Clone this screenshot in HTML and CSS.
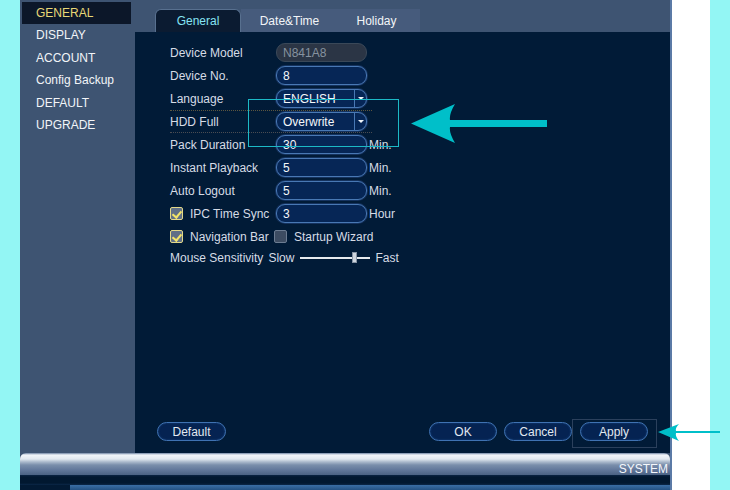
FILE: index.html
```html
<!DOCTYPE html>
<html lang="en">
<head>
    <meta charset="UTF-8">
    <title>System - General</title>
    <link rel="stylesheet" href="styles.css">
</head>
<body>
    <div class="edge"></div>

    <div class="screen">
        <div class="main">
            <ul class="sidebar">
                <li class="active">GENERAL</li>
                <li>DISPLAY</li>
                <li>ACCOUNT</li>
                <li>Config Backup</li>
                <li>DEFAULT</li>
                <li>UPGRADE</li>
            </ul>

            <div class="page">
                <div class="tabs">
                    <div class="tab active">General</div>
                    <div class="tab-rest">
                        <div class="tab">Date&amp;Time</div>
                        <div class="tab">Holiday</div>
                    </div>
                </div>

                <div class="panel">
                    <div class="form">
                        <div class="row">
                            <span class="label">Device Model</span>
                            <span class="field disabled">N841A8</span>
                        </div>
                        <div class="row">
                            <span class="label">Device No.</span>
                            <span class="field">8</span>
                        </div>
                        <div class="row">
                            <span class="label">Language</span>
                            <span class="field select">ENGLISH<span class="caret"></span></span>
                        </div>
                        <div class="row focus">
                            <span class="label">HDD Full</span>
                            <span class="field select">Overwrite<span class="caret"></span></span>
                        </div>
                        <div class="row">
                            <span class="label">Pack Duration</span>
                            <span class="field">30</span>
                            <span class="unit">Min.</span>
                        </div>
                        <div class="row">
                            <span class="label">Instant Playback</span>
                            <span class="field">5</span>
                            <span class="unit">Min.</span>
                        </div>
                        <div class="row">
                            <span class="label">Auto Logout</span>
                            <span class="field">5</span>
                            <span class="unit">Min.</span>
                        </div>
                        <div class="row">
                            <span class="label"><span class="check on"></span>IPC Time Sync</span>
                            <span class="field">3</span>
                            <span class="unit">Hour</span>
                        </div>
                        <div class="row">
                            <span class="label"><span class="check on"></span>Navigation Bar</span>
                            <span class="check off"></span>Startup Wizard
                        </div>
                        <div class="row slider-row">
                            <span>Mouse Sensitivity</span>
                            <span>Slow</span>
                            <span class="slider"><span class="thumb"></span></span>
                            <span>Fast</span>
                        </div>
                    </div>

                    <div class="actions">
                        <button class="btn default">Default</button>
                        <button class="btn">OK</button>
                        <button class="btn">Cancel</button>
                        <button class="btn apply">Apply</button>
                    </div>
                </div>
            </div>
        </div>

        <div class="footer">
            <div class="footer-top">SYSTEM</div>
            <div class="footer-dark"></div>
            <div class="footer-band"><span></span></div>
        </div>
    </div>

    <div class="gap"></div>
    <div class="edge"></div>

    <!-- annotation marks drawn over the screenshot -->
    <svg class="marks" width="730" height="490" viewBox="0 0 730 490">
        <rect x="248.5" y="99.5" width="150" height="47" fill="none" stroke="#1cb9c6" stroke-width="1"/>
        <path d="M411 123.5 L455 104 Q449 114 450 120 L547 120 L547 127 L450 127 Q449 133 455 143 Z" fill="#00bfc9"/>
        <rect x="572.5" y="419.5" width="84" height="28" fill="none" stroke="#2b405c" stroke-width="1"/>
        <path d="M658 432 L679 424 Q675 428 676 431 L720 431 L720 433 L676 433 Q675 436 679 441 Z" fill="#00bfc9"/>
    </svg>
</body>
</html>
```

FILE: styles.css
```css
* {
    margin: 0;
    padding: 0;
    box-sizing: border-box;
}

body {
    width: 730px;
    height: 490px;
    display: flex;
    position: relative;
    overflow: hidden;
    background: #fff;
    font-family: 'Liberation Sans', Arial, sans-serif;
    font-size: 12px;
    color: #d6dce6;
}

.edge {
    width: 20px;
    background: #93f6f4;
}

.gap {
    width: 38px;
    background: #fff;
}

.screen {
    width: 652px;
    display: flex;
    flex-direction: column;
    background: #3e5472;
    border-right: 2px solid #5b7aa6;
}

.main {
    display: flex;
    height: 453px;
}

/* left menu */
.sidebar {
    width: 115px;
    list-style: none;
    padding: 2px 4px 0 2px;
}

.sidebar li {
    height: 22.4px;
    line-height: 22.4px;
    padding-left: 14px;
    color: #f2f5f8;
}

.sidebar li.active {
    background: #0c1729;
    color: #e9d877;
}

.page {
    flex: 1;
    display: flex;
    flex-direction: column;
}

/* tabs */
.tabs {
    height: 32px;
    display: flex;
    align-items: flex-end;
    padding-left: 20px;
}

.tab {
    height: 23px;
    display: flex;
    align-items: center;
    justify-content: center;
    width: 87px;
    color: #f2f5f8;
}

.tab.active {
    width: 86px;
    background: #0b1b31;
    border: 1px solid #58708f;
    border-bottom: none;
    border-radius: 6px 6px 0 0;
    color: #86e4f4;
}

.tab-rest {
    display: flex;
    padding-left: 5px;
    background: #465b7c;
}

/* form panel */
.panel {
    flex: 1;
    display: flex;
    flex-direction: column;
    background: #011b37;
    padding: 9px 22px 12px 22px;
}

.form {
    flex: 1;
    padding-left: 13px;
}

.row {
    height: 23px;
    display: flex;
    align-items: center;
}

.row.focus {
    width: 202px;
    border-top: 1px dotted #5c5640;
    border-bottom: 1px dotted #4a4c52;
}

.label {
    width: 106px;
    display: flex;
    align-items: center;
}

.field {
    width: 91px;
    height: 19px;
    display: flex;
    align-items: center;
    padding-left: 6px;
    background: #062656;
    border: 1px solid #4878b4;
    border-radius: 9px;
    box-shadow: 0 0 0 1px #15325e;
    color: #f4f7fa;
}

.field.disabled {
    background: #2b3545;
    border-color: #3a4858;
    box-shadow: none;
    color: #86929f;
}

.field.select {
    position: relative;
}

.caret {
    position: absolute;
    right: 0;
    top: 0;
    bottom: 0;
    width: 12px;
    border-left: 1px solid #4878b4;
}

.caret::after {
    content: "";
    position: absolute;
    left: 3px;
    top: 7px;
    border-left: 3px solid transparent;
    border-right: 3px solid transparent;
    border-top: 3px solid #f0f4f8;
}

.unit {
    margin-left: 2px;
}

.check {
    width: 13px;
    height: 13px;
    border-radius: 2px;
    margin-right: 7px;
    position: relative;
}

.check.on {
    background: #5f6f86;
    border: 1px solid #e2d88a;
}

.check.on::after {
    content: "";
    position: absolute;
    left: 3px;
    top: 1px;
    width: 4px;
    height: 7px;
    border-right: 2px solid #f3e468;
    border-bottom: 2px solid #f3e468;
    transform: rotate(40deg);
}

.check.off {
    margin-left: -2px;
    background: #3d4c62;
    border: 1px solid #6c7c92;
}

.slider-row {
    height: 19px;
    gap: 5px;
}

.slider {
    width: 70px;
    height: 2px;
    margin-left: 1px;
    background: #e6eaee;
    position: relative;
}

.thumb {
    position: absolute;
    left: 52px;
    top: -5px;
    width: 5px;
    height: 11px;
    background: #cfd6de;
    border: 1px solid #8794a4;
}

/* buttons */
.actions {
    display: flex;
    align-items: center;
    gap: 7px;
}

.btn {
    width: 68px;
    height: 19px;
    border: 1px solid #3f72b2;
    border-radius: 10px;
    background: #052352;
    box-shadow: inset 0 0 2px #1d4a86;
    color: #e2e9f1;
    font-family: inherit;
    font-size: 12px;
}

.btn.default {
    width: 69px;
    margin-right: auto;
}

.btn.apply {
    margin-left: 1px;
}

/* bottom bar */
.footer {
    height: 37px;
    display: flex;
    flex-direction: column;
}

.footer-top {
    height: 22px;
    display: flex;
    justify-content: flex-end;
    align-items: flex-end;
    padding-right: 2px;
    line-height: 12px;
    font-size: 12px;
    color: #f4f7fb;
    border-radius: 6px 6px 0 0;
    background: linear-gradient(#6e84a4 0, #f2f6fa 2px, #e2e9f0 6px, #a9b8cb 9px, #7a8eab 12px, #61779a 17px, #4a6283 22px);
}

.footer-dark {
    height: 10px;
    background: linear-gradient(#0a2444 0, #011830 2px, #011830 8px, #0b2748 10px);
}

.footer-band {
    height: 5px;
    background: #021a34;
    padding-left: 50px;
    display: flex;
}

.footer-band span {
    flex: 1;
    background: linear-gradient(#3a6ea4, #245284);
}

.marks {
    position: absolute;
    left: 0;
    top: 0;
    pointer-events: none;
}
```
